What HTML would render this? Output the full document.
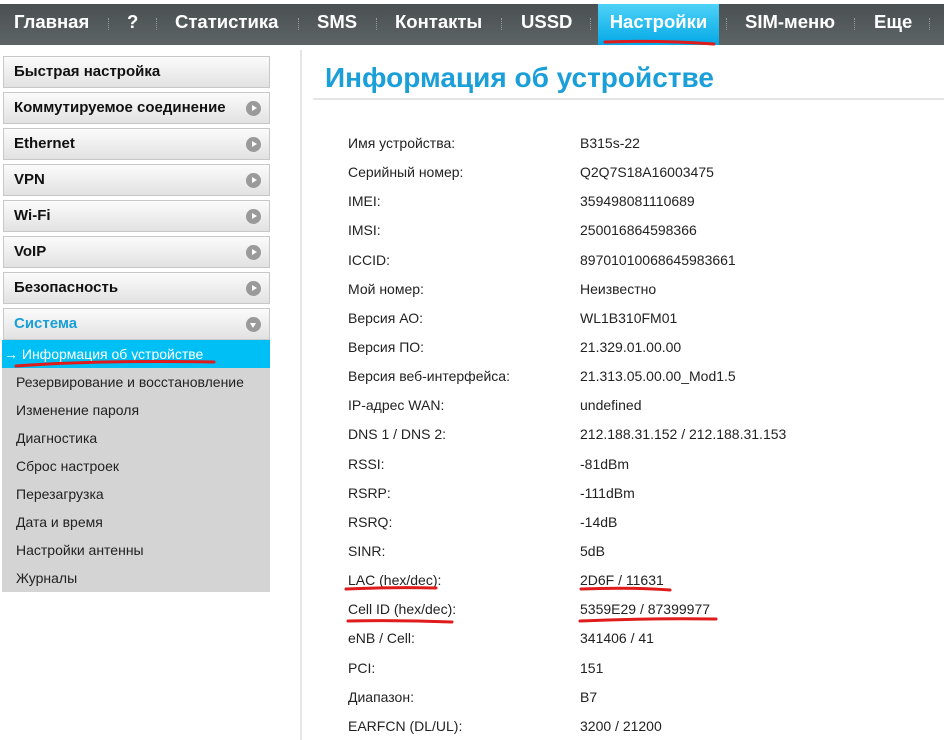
<!DOCTYPE html><html><head><meta charset="utf-8"><style>
*{margin:0;padding:0;box-sizing:border-box}
body{width:944px;height:740px;overflow:hidden;background:#fff;font-family:"Liberation Sans",Arial,sans-serif;position:relative}
.nav{position:absolute;left:0;top:4px;width:944px;height:41px;background:linear-gradient(#4a5052,#5d6466)}
.nav span{position:absolute;top:0;height:41px;line-height:36px;color:#fff;font-weight:bold;font-size:18.5px}
.nav .act{background:linear-gradient(#4fd2f7,#04a8e6);text-align:center}
.sep{position:absolute;top:14px;width:1px;height:12px;border-left:1px dotted #999}
.mi{position:absolute;left:3px;width:267px;height:32px;border:1px solid #c8c8c8;background:linear-gradient(#fbfbfb,#e2e2e2);font-weight:bold;font-size:15px;line-height:30px;padding-left:10px;color:#111}
.mi i{position:absolute;right:8px;top:8px;width:15px;height:15px;border-radius:50%;background:#9a9a9a}
.mi i:after{content:"";position:absolute;left:6px;top:4px;border-left:5px solid #fff;border-top:3.5px solid transparent;border-bottom:3.5px solid transparent}
.mi i.d:after{left:4px;top:6px;border-top:5px solid #fff;border-left:3.5px solid transparent;border-right:3.5px solid transparent;border-bottom:0}
.sub{position:absolute;left:2px;top:340px;width:268px;height:252px;background:#d4d4d4}
.sub div{height:28px;line-height:28px;padding-left:14px;font-size:14px;color:#222}
.sub .a{background:#00bff5;color:#fff;padding-left:2px}
.lbl,.val{position:absolute;font-size:14px;color:#222}
.lbl{left:348px}.val{left:580px}
</style></head><body>
<div class="nav">
<span style="left:14px">Главная</span><div class="sep" style="left:108px"></div>
<span style="left:127px">?</span><div class="sep" style="left:156px"></div>
<span style="left:175px">Статистика</span><div class="sep" style="left:298px"></div>
<span style="left:317px">SMS</span><div class="sep" style="left:376px"></div>
<span style="left:395px">Контакты</span><div class="sep" style="left:501px"></div>
<span style="left:521px">USSD</span><div class="sep" style="left:590px"></div>
<span class="act" style="left:598px;width:121px">Настройки</span><div class="sep" style="left:726px"></div>
<span style="left:745px">SIM-меню</span><div class="sep" style="left:854px"></div>
<span style="left:874px">Еще</span><div class="sep" style="left:929px"></div>
</div>
<div class="mi" style="top:56px">Быстрая настройка</div>
<div class="mi" style="top:92px">Коммутируемое соединение<i></i></div>
<div class="mi" style="top:128px">Ethernet<i></i></div>
<div class="mi" style="top:164px">VPN<i></i></div>
<div class="mi" style="top:200px">Wi-Fi<i></i></div>
<div class="mi" style="top:236px">VoIP<i></i></div>
<div class="mi" style="top:272px">Безопасность<i></i></div>
<div class="mi" style="top:308px;color:#1a9fd8">Система<i class="d"></i></div>
<div class="sub">
<div class="a">→ Информация об устройстве</div>
<div>Резервирование и восстановление</div><div>Изменение пароля</div><div>Диагностика</div><div>Сброс настроек</div><div>Перезагрузка</div><div>Дата и время</div><div>Настройки антенны</div><div>Журналы</div>
</div>
<div style="position:absolute;left:300px;top:50px;width:2px;height:690px;background:#e6e6e6"></div>
<div style="position:absolute;left:325px;top:62px;font-size:28px;font-weight:bold;color:#1a9fd8">Информация об устройстве</div>
<div style="position:absolute;left:313px;top:98px;width:631px;height:2px;background:#e6e6e6"></div>
<div class="lbl" style="top:135px">Имя устройства:</div><div class="val" style="top:135px">B315s-22</div>
<div class="lbl" style="top:164px">Серийный номер:</div><div class="val" style="top:164px">Q2Q7S18A16003475</div>
<div class="lbl" style="top:193px">IMEI:</div><div class="val" style="top:193px">359498081110689</div>
<div class="lbl" style="top:222px">IMSI:</div><div class="val" style="top:222px">250016864598366</div>
<div class="lbl" style="top:252px">ICCID:</div><div class="val" style="top:252px">89701010068645983661</div>
<div class="lbl" style="top:281px">Мой номер:</div><div class="val" style="top:281px">Неизвестно</div>
<div class="lbl" style="top:310px">Версия АО:</div><div class="val" style="top:310px">WL1B310FM01</div>
<div class="lbl" style="top:339px">Версия ПО:</div><div class="val" style="top:339px">21.329.01.00.00</div>
<div class="lbl" style="top:368px">Версия веб-интерфейса:</div><div class="val" style="top:368px">21.313.05.00.00_Mod1.5</div>
<div class="lbl" style="top:397px">IP-адрес WAN:</div><div class="val" style="top:397px">undefined</div>
<div class="lbl" style="top:426px">DNS 1 / DNS 2:</div><div class="val" style="top:426px">212.188.31.152 / 212.188.31.153</div>
<div class="lbl" style="top:456px">RSSI:</div><div class="val" style="top:456px">-81dBm</div>
<div class="lbl" style="top:485px">RSRP:</div><div class="val" style="top:485px">-111dBm</div>
<div class="lbl" style="top:514px">RSRQ:</div><div class="val" style="top:514px">-14dB</div>
<div class="lbl" style="top:543px">SINR:</div><div class="val" style="top:543px">5dB</div>
<div class="lbl" style="top:572px">LAC (hex/dec):</div><div class="val" style="top:572px">2D6F / 11631</div>
<div class="lbl" style="top:601px">Cell ID (hex/dec):</div><div class="val" style="top:601px">5359E29 / 87399977</div>
<div class="lbl" style="top:630px">eNB / Cell:</div><div class="val" style="top:630px">341406 / 41</div>
<div class="lbl" style="top:660px">PCI:</div><div class="val" style="top:660px">151</div>
<div class="lbl" style="top:689px">Диапазон:</div><div class="val" style="top:689px">B7</div>
<div class="lbl" style="top:718px">EARFCN (DL/UL):</div><div class="val" style="top:718px">3200 / 21200</div>
<svg style="position:absolute;left:0;top:0;z-index:5" width="944" height="740">
<path d="M605 42 Q660 40 714 44" stroke="#e01b1b" stroke-width="3" fill="none" stroke-linecap="round"/>
<path d="M16 366 Q100 360 214 362" stroke="#e01b1b" stroke-width="3" fill="none" stroke-linecap="round"/>
<path d="M346 589 Q390 587 436 588" stroke="#e01b1b" stroke-width="3" fill="none" stroke-linecap="round"/>
<path d="M581 589 Q630 587 670 590" stroke="#e01b1b" stroke-width="3" fill="none" stroke-linecap="round"/>
<path d="M348 621 Q400 620 452 622" stroke="#e01b1b" stroke-width="3" fill="none" stroke-linecap="round"/>
<path d="M580 621 Q650 618 716 619" stroke="#e01b1b" stroke-width="3" fill="none" stroke-linecap="round"/>
</svg>
</body></html>
